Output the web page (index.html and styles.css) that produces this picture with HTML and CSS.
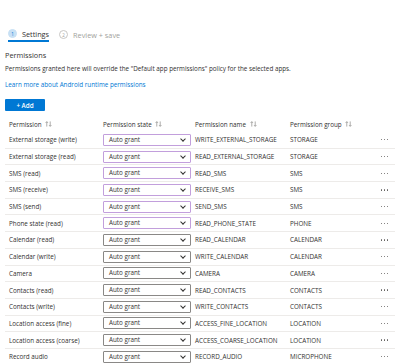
FILE: index.html
```html
<!DOCTYPE html>
<html lang="en">
<head>
    <meta charset="UTF-8"/>
    <meta name="viewport" content="width=device-width, initial-scale=1"/>
    <title>Permissions</title>
    <link rel="stylesheet" href="styles.css">
</head>
<body>

<div class="page">
    <nav class="steps">
        <div class="step active"><span class="num">1</span><span class="label">Settings</span></div>
        <div class="step"><span class="num">2</span><span class="label">Review + save</span></div>
    </nav>

    <h2 class="section-title">Permissions</h2>
    <p class="desc">Permissions granted here will override the "Default app permissions" policy for the selected apps.</p>
    <a class="learn" href="#">Learn more about Android runtime permissions</a>

    <button class="add-btn">+ Add</button>

    <div class="perm-table">
        <div class="row head">
            <div class="cell">Permission <svg class="sort" viewBox="0 0 8 7"><path d="M2 6.5V0.8M0.6 2.2L2 0.8L3.4 2.2M6 0.5V6.2M4.6 4.8L6 6.2L7.4 4.8"/></svg></div>
            <div class="cell">Permission state <svg class="sort" viewBox="0 0 8 7"><path d="M2 6.5V0.8M0.6 2.2L2 0.8L3.4 2.2M6 0.5V6.2M4.6 4.8L6 6.2L7.4 4.8"/></svg></div>
            <div class="cell">Permission name <svg class="sort" viewBox="0 0 8 7"><path d="M2 6.5V0.8M0.6 2.2L2 0.8L3.4 2.2M6 0.5V6.2M4.6 4.8L6 6.2L7.4 4.8"/></svg></div>
            <div class="cell">Permission group <svg class="sort" viewBox="0 0 8 7"><path d="M2 6.5V0.8M0.6 2.2L2 0.8L3.4 2.2M6 0.5V6.2M4.6 4.8L6 6.2L7.4 4.8"/></svg></div>
            <div class="cell"></div>
        </div>

        <div class="row">
            <div class="cell">External storage (write)</div>
            <div class="cell"><div class="select touched">Auto grant<span class="chev"></span></div></div>
            <div class="cell">WRITE_EXTERNAL_STORAGE</div>
            <div class="cell">STORAGE</div>
            <div class="cell more"><i></i><i></i><i></i></div>
        </div>
        <div class="row">
            <div class="cell">External storage (read)</div>
            <div class="cell"><div class="select touched">Auto grant<span class="chev"></span></div></div>
            <div class="cell">READ_EXTERNAL_STORAGE</div>
            <div class="cell">STORAGE</div>
            <div class="cell more"><i></i><i></i><i></i></div>
        </div>
        <div class="row">
            <div class="cell">SMS (read)</div>
            <div class="cell"><div class="select touched">Auto grant<span class="chev"></span></div></div>
            <div class="cell">READ_SMS</div>
            <div class="cell">SMS</div>
            <div class="cell more"><i></i><i></i><i></i></div>
        </div>
        <div class="row">
            <div class="cell">SMS (receive)</div>
            <div class="cell"><div class="select touched">Auto grant<span class="chev"></span></div></div>
            <div class="cell">RECEIVE_SMS</div>
            <div class="cell">SMS</div>
            <div class="cell more"><i></i><i></i><i></i></div>
        </div>
        <div class="row">
            <div class="cell">SMS (send)</div>
            <div class="cell"><div class="select touched">Auto grant<span class="chev"></span></div></div>
            <div class="cell">SEND_SMS</div>
            <div class="cell">SMS</div>
            <div class="cell more"><i></i><i></i><i></i></div>
        </div>
        <div class="row">
            <div class="cell">Phone state (read)</div>
            <div class="cell"><div class="select touched">Auto grant<span class="chev"></span></div></div>
            <div class="cell">READ_PHONE_STATE</div>
            <div class="cell">PHONE</div>
            <div class="cell more"><i></i><i></i><i></i></div>
        </div>
        <div class="row">
            <div class="cell">Calendar (read)</div>
            <div class="cell"><div class="select">Auto grant<span class="chev"></span></div></div>
            <div class="cell">READ_CALENDAR</div>
            <div class="cell">CALENDAR</div>
            <div class="cell more"><i></i><i></i><i></i></div>
        </div>
        <div class="row">
            <div class="cell">Calendar (write)</div>
            <div class="cell"><div class="select">Auto grant<span class="chev"></span></div></div>
            <div class="cell">WRITE_CALENDAR</div>
            <div class="cell">CALENDAR</div>
            <div class="cell more"><i></i><i></i><i></i></div>
        </div>
        <div class="row">
            <div class="cell">Camera</div>
            <div class="cell"><div class="select">Auto grant<span class="chev"></span></div></div>
            <div class="cell">CAMERA</div>
            <div class="cell">CAMERA</div>
            <div class="cell more"><i></i><i></i><i></i></div>
        </div>
        <div class="row">
            <div class="cell">Contacts (read)</div>
            <div class="cell"><div class="select">Auto grant<span class="chev"></span></div></div>
            <div class="cell">READ_CONTACTS</div>
            <div class="cell">CONTACTS</div>
            <div class="cell more"><i></i><i></i><i></i></div>
        </div>
        <div class="row">
            <div class="cell">Contacts (write)</div>
            <div class="cell"><div class="select">Auto grant<span class="chev"></span></div></div>
            <div class="cell">WRITE_CONTACTS</div>
            <div class="cell">CONTACTS</div>
            <div class="cell more"><i></i><i></i><i></i></div>
        </div>
        <div class="row">
            <div class="cell">Location access (fine)</div>
            <div class="cell"><div class="select">Auto grant<span class="chev"></span></div></div>
            <div class="cell">ACCESS_FINE_LOCATION</div>
            <div class="cell">LOCATION</div>
            <div class="cell more"><i></i><i></i><i></i></div>
        </div>
        <div class="row">
            <div class="cell">Location access (coarse)</div>
            <div class="cell"><div class="select">Auto grant<span class="chev"></span></div></div>
            <div class="cell">ACCESS_COARSE_LOCATION</div>
            <div class="cell">LOCATION</div>
            <div class="cell more"><i></i><i></i><i></i></div>
        </div>
        <div class="row">
            <div class="cell">Record audio</div>
            <div class="cell"><div class="select">Auto grant<span class="chev"></span></div></div>
            <div class="cell">RECORD_AUDIO</div>
            <div class="cell">MICROPHONE</div>
            <div class="cell more"><i></i><i></i><i></i></div>
        </div>
    </div>
</div>

</body>
</html>
```

FILE: styles.css
```css
/* reset */
* {
    margin: 0;
    padding: 0;
    box-sizing: border-box;
}

body {
    font-family: 'Open Sans', 'Noto Sans', sans-serif;
    font-size: 6.3px;
    color: #323130;
    background: #fff;
}

.page {
    padding: 27px 5px 0 5px;
}

/* wizard steps */
.steps {
    display: flex;
    gap: 10px;
    padding-left: 3px;
}

.step {
    display: flex;
    align-items: center;
    gap: 5px;
    height: 15px;
    color: #a19f9d;
    font-size: 7.3px;
}

.step.active {
    color: #323130;
    border-bottom: 2px solid #0078d4;
}

.num {
    width: 9px;
    height: 9px;
    border-radius: 50%;
    border: 1px solid #c8c6c4;
    font-size: 4.5px;
    display: flex;
    align-items: center;
    justify-content: center;
}

.step.active .num {
    background: #c7e0f4;
    border-color: #c7e0f4;
    color: #0078d4;
}

.section-title {
    font-size: 7.3px;
    font-weight: normal;
    margin-top: 8px;
}

.desc {
    margin-top: 4px;
}

.learn {
    display: block;
    margin-top: 7px;
    color: #0078d4;
    text-decoration: none;
}

.add-btn {
    display: block;
    margin-top: 10px;
    width: 40px;
    height: 12px;
    background: #0078d4;
    color: #fff;
    border: none;
    border-radius: 1px;
    font-family: inherit;
    font-size: 6.3px;
    font-weight: 600;
}

/* table */
.perm-table {
    margin-top: 5px;
}

.row {
    display: grid;
    grid-template-columns: 94px 92px 95px 88px 1fr;
    align-items: center;
    height: 16.7px;
    border-bottom: 1px solid #edebe9;
}

.row.head {
    height: 16px;
    border-bottom: none;
}

.cell {
    padding-left: 4px;
    white-space: nowrap;
}

.sort {
    width: 7px;
    height: 6px;
    margin-left: 2px;
    vertical-align: -0.5px;
    fill: none;
    stroke: #8a8886;
    stroke-width: 0.8;
}

.select {
    position: relative;
    width: 88px;
    height: 12px;
    border: 1px solid #8a8886;
    border-radius: 1px;
    padding-left: 5px;
    line-height: 10px;
}

.select.touched {
    border-color: #c29fdc;
}

.chev {
    position: absolute;
    right: 5px;
    top: 2px;
    width: 4px;
    height: 4px;
    border-right: 1px solid #323130;
    border-bottom: 1px solid #323130;
    transform: rotate(45deg);
}

.more {
    display: flex;
    justify-content: flex-end;
    gap: 1.5px;
    padding-right: 7px;
}

.more i {
    width: 1.3px;
    height: 1.3px;
    border-radius: 50%;
    background: #605e5c;
}
```
